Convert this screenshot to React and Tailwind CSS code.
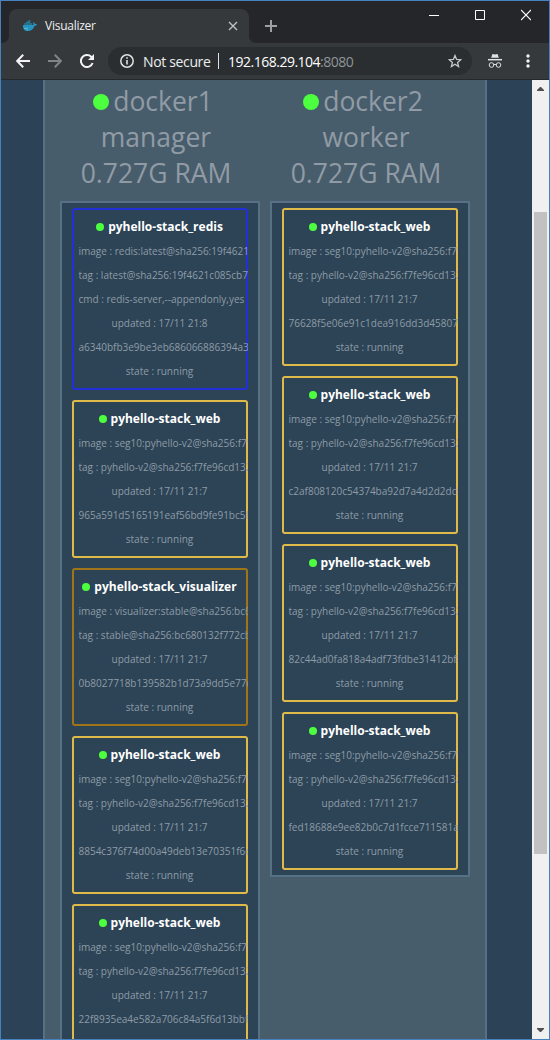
import React from "react";

const WEB_IMAGE = "image : seg10:pyhello-v2@sha256:f7fe96cd13";
const WEB_TAG = "tag : pyhello-v2@sha256:f7fe96cd132c";

const web = (id) => ({
  name: "pyhello-stack_web",
  border: "shadow-[inset_0_0_0_2px_#dfba49]",
  lines: [WEB_IMAGE, WEB_TAG, "updated : 17/11 21:7", id, "state : running"],
});

const nodes = [
  {
    name: "docker1",
    role: "manager",
    tasks: [
      {
        name: "pyhello-stack_redis",
        border: "shadow-[inset_0_0_0_2px_#2230d8]",
        lines: [
          "image : redis:latest@sha256:19f4621c085",
          "tag : latest@sha256:19f4621c085cb7c",
          "cmd : redis-server,--appendonly,yes",
          "updated : 17/11 21:8",
          "a6340bfb3e9be3eb686066886394a3b",
          "state : running",
        ],
      },
      web("965a591d5165191eaf56bd9fe91bc58d"),
      {
        name: "pyhello-stack_visualizer",
        border: "shadow-[inset_0_0_0_2px_#a07418]",
        lines: [
          "image : visualizer:stable@sha256:bc680132",
          "tag : stable@sha256:bc680132f772cb44",
          "updated : 17/11 21:7",
          "0b8027718b139582b1d73a9dd5e77c4",
          "state : running",
        ],
      },
      web("8854c376f74d00a49deb13e70351f6c2"),
      web("22f8935ea4e582a706c84a5f6d13bbfa"),
    ],
  },
  {
    name: "docker2",
    role: "worker",
    tasks: [
      web("76628f5e06e91c1dea916dd3d458072"),
      web("c2af808120c54374ba92d7a4d2d2dcb"),
      web("82c44ad0fa818a4adf73fdbe31412bf8"),
      web("fed18688e9ee82b0c7d1fcce711581a4"),
    ],
  },
];

function Task({ task }) {
  return (
    <li
      className={`w-[176px] shrink-0 overflow-hidden rounded-[3px] pt-[7px] pr-[7.500px] pb-[7px] pl-[6.500px] text-center text-[10px] leading-[24px] whitespace-nowrap text-[#8f9ba6] ${task.border}`}
    >
      <div className="flex h-6 items-center justify-center gap-1 text-[12px] font-bold text-white">
        <span className="size-2 shrink-0 rounded-full bg-[#4cff3f]" />
        <span>{task.name}</span>
      </div>
      {task.lines.map((line) => (
        <div key={line} className="h-6">{line}</div>
      ))}
    </li>
  );
}

function Node({ node }) {
  return (
    <section className="w-[200px] shrink-0">
      <header className="flex h-[118px] flex-col items-center pr-[8px] text-[26.500px] leading-[36px] text-[#919ba5]">
        <div className="flex items-center gap-[4px] pr-[6px]">
          <span className="mt-[2px] size-4 rounded-full bg-[#4cff3f]" />
          <span>{node.name}</span>
        </div>
        <div>{node.role}</div>
        <div>0.727G RAM</div>
      </header>
      <ul className="flex flex-col gap-[10px] border-2 border-[#567185] bg-[#2c4456] px-[10px] py-[5px]">
        {node.tasks.map((task, i) => (
          <Task key={i} task={task} />
        ))}
      </ul>
    </section>
  );
}

function Whale() {
  return (
    <svg width="16" height="16" viewBox="0 0 16 16" className="shrink-0">
      <path d="M1 7h10.2c.4-.5.3-1.5-.1-2.2l.7-.6c.8.5 1.1 1.1 1.2 1.8.7-.1 1.4 0 2 .4-.4.9-1.2 1.3-2.4 1.3C11.500 11.200 9 13 5.700 13 2.600 13 .7 11 1 7Z" fill="#2496bd" />
      <path d="M2.200 5.200h8v1.500h-8zM4.300 3.600h3.900v1.300H4.300zM6.600 2h1.700v1.300H6.600z" fill="#27809f" />
      <path d="M2 10.500c1.600.2 3-.1 4-.7M5 11.800h1" stroke="#8ed1e5" strokeWidth=".6" fill="none" />
    </svg>
  );
}

function TitleBar() {
  return (
    <div className="flex h-[42px] shrink-0 bg-[#242629]">
      <div className="flex w-[8px] items-end bg-[#35393c]">
        <div className="h-full w-full rounded-br-[7px] bg-[#242629]" />
      </div>
      <div className="mt-2 flex w-[240px] items-center rounded-t-[8px] bg-[#35393c] pr-[11px] pl-[13px]">
        <Whale />
        <span className="ml-[7px] flex-1 text-[12px] tracking-[-0.25px] text-[#eceeef]">Visualizer</span>
        <svg width="10" height="10" viewBox="0 0 10 10" stroke="#bcc0c3" strokeWidth="1.400">
          <path d="M1 1l8 8M9 1L1 9" />
        </svg>
      </div>
      <div className="flex flex-1 bg-[#35393c]">
        <div className="flex flex-1 rounded-bl-[7px] bg-[#242629]">
          <svg width="12" height="12" viewBox="0 0 12 12" className="mt-[19px] ml-[16px]" stroke="#9da1a5" strokeWidth="2">
            <path d="M6 0v12M0 6h12" />
          </svg>
          <div className="mt-[8px] ml-auto flex gap-[36px] pr-[18px]">
            <svg width="10" height="12" viewBox="0 0 10 12" stroke="#fff">
              <path d="M0 6.500h10" />
            </svg>
            <svg width="10" height="12" viewBox="0 0 10 12" fill="none" stroke="#fff">
              <path d="M.5 1.500h9v9h-9z" />
            </svg>
            <svg width="10" height="12" viewBox="0 0 10 12" stroke="#fff" strokeWidth="1.100">
              <path d="M0 1l10 10M10 1L0 11" />
            </svg>
          </div>
        </div>
      </div>
    </div>
  );
}

function Toolbar() {
  return (
    <div className="flex h-[37px] shrink-0 items-center border-b border-[#26292b] bg-[#35393c] pl-[15px]">
      <svg width="14" height="14" viewBox="0 0 14 14" fill="none" stroke="#f1f3f4" strokeWidth="2">
        <path d="M14 7H1.500M7.200 .8L1.200 7l6 6.200" />
      </svg>
      <svg width="14" height="14" viewBox="0 0 14 14" fill="none" stroke="#808488" strokeWidth="2" className="ml-[18px]">
        <path d="M0 7h12.500M6.800 .8l6 6.200-6 6.200" />
      </svg>
      <svg width="14" height="14" viewBox="0 0 14 14" className="ml-[18px]">
        <path d="M12.600 9a6 6 0 1 1-1.400-6.200l1 1" fill="none" stroke="#f1f3f4" strokeWidth="2" />
        <path d="M14 0v6H8z" fill="#f1f3f4" />
      </svg>
      <div className="ml-[14px] flex h-[28px] w-[364px] items-center rounded-full bg-[#2a2e30] pr-[10px] pl-[12px]">
        <svg width="14" height="14" viewBox="0 0 14 14" fill="none" stroke="#dfe2e4">
          <circle cx="7" cy="7" r="6.200" strokeWidth="1.500" />
          <path d="M7 6v4.500M7 3.300v1.500" strokeWidth="1.600" />
        </svg>
        <span className="ml-[9px] w-[67px] text-[14px] tracking-[-0.35px] whitespace-nowrap text-[#eceeef]">Not secure</span>
        <span className="ml-[8px] h-4 w-px bg-[#dfe2e4]" />
        <span className="ml-[9px] text-[14px] tracking-[-0.5px] text-white">
          192.168.29.104<span className="text-[#8f9599]">:8080</span>
        </span>
        <svg width="14" height="14" viewBox="0 0 14 14" className="ml-auto" fill="none" stroke="#c7cacc" strokeWidth="1.300">
          <path d="M7 1.500l1.600 3.900 4.200.3-3.200 2.700 1 4.100L7 10.300l-3.600 2.200 1-4.100L1.200 5.700l4.200-.3z" />
        </svg>
      </div>
      <svg width="14" height="14" viewBox="0 0 14 14" className="ml-[16px]" fill="none" stroke="#dfe2e4">
        <path d="M4.400 0l2.600.6L9.600 0l1.200 3.700H3.200z" fill="#dfe2e4" stroke="none" />
        <path d="M0 5.700h14" strokeWidth="1.500" />
        <circle cx="3.500" cy="11" r="2.300" />
        <circle cx="10.500" cy="11" r="2.300" />
        <path d="M5.800 10.700q1.200-.8 2.400 0" />
      </svg>
      <svg width="4" height="14" viewBox="0 0 4 14" fill="#f1f3f4" className="ml-[24px]">
        <circle cx="2" cy="2" r="1.700" />
        <circle cx="2" cy="7" r="1.700" />
        <circle cx="2" cy="12" r="1.700" />
      </svg>
    </div>
  );
}

function Scrollbar() {
  return (
    <div className="flex w-[17px] shrink-0 flex-col items-center bg-[#f0f0f0]">
      <svg width="7" height="4" viewBox="0 0 7 4" className="mt-[7px] shrink-0" fill="#505050">
        <path d="M0 4V3l3-3h1l3 3v1z" />
      </svg>
      <div className="mt-[121px] h-[642px] w-[13px] shrink-0 bg-[#c1c1c1]" />
      <svg width="7" height="4" viewBox="0 0 7 4" className="mt-auto mb-[7px] shrink-0" fill="#505050">
        <path d="M0 0v1l3 3h1l3-3V0z" />
      </svg>
    </div>
  );
}

export default function App() {
  return (
    <div className="flex h-[1040px] w-[550px] flex-col overflow-hidden border border-[#4682bd] font-['Open_Sans','Noto_Sans',sans-serif]">
      <TitleBar />
      <Toolbar />
      <div className="flex min-h-0 flex-1 overflow-hidden bg-[#2c4256]">
        <main className="flex min-w-0 flex-1 overflow-hidden pl-[42px]">
          <div className="flex w-[444px] shrink-0 items-start gap-[10px] border-x-2 border-[#567185] bg-[#485d6c] px-[15px] pt-[3px]">
            {nodes.map((node) => (
              <Node key={node.name} node={node} />
            ))}
          </div>
        </main>
        <Scrollbar />
      </div>
    </div>
  );
}
